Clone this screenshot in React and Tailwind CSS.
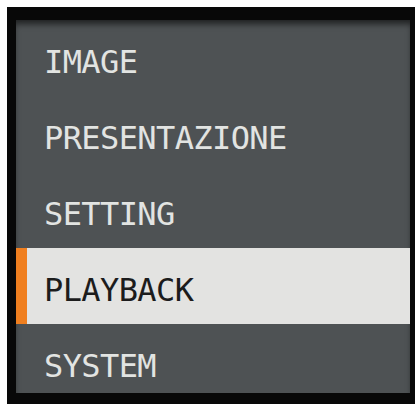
import React from 'react';

const items = ['IMAGE', 'PRESENTAZIONE', 'SETTING', 'PLAYBACK', 'SYSTEM'];

const App = () => {
    const selected = 'PLAYBACK';

    return (
        <div className="w-[418px] h-[409px] bg-white pt-[7px] pl-[7px]">
            <div className="w-[408px] h-[397px] bg-[#080808] pt-[13px] pl-[9px] pr-[5px] pb-[11px]">
                <div className="h-full bg-[#4e5254] flex flex-col overflow-hidden shadow-[inset_0_6px_6px_-2px_rgba(0,0,0,0.6)]">
                    {items.map((item) => {
                        const active = item === selected;
                        return (
                            <div
                                key={item}
                                className={`h-[76px] shrink-0 flex items-center ${active ? 'bg-[#e3e3e1] border-l-[11px] border-[#f07f1f] pl-[17px]' : 'pl-[28px]'}`}
                            >
                                <span
                                    className={`font-['DejaVu_Sans_Mono',monospace] text-[32px] leading-none tracking-[-0.6px] pt-[8px] ${active ? 'text-[#1c1c1c]' : 'text-[#e2e4e2]'}`}
                                >
                                    {item}
                                </span>
                            </div>
                        );
                    })}
                </div>
            </div>
        </div>
    );
};

export default App;
